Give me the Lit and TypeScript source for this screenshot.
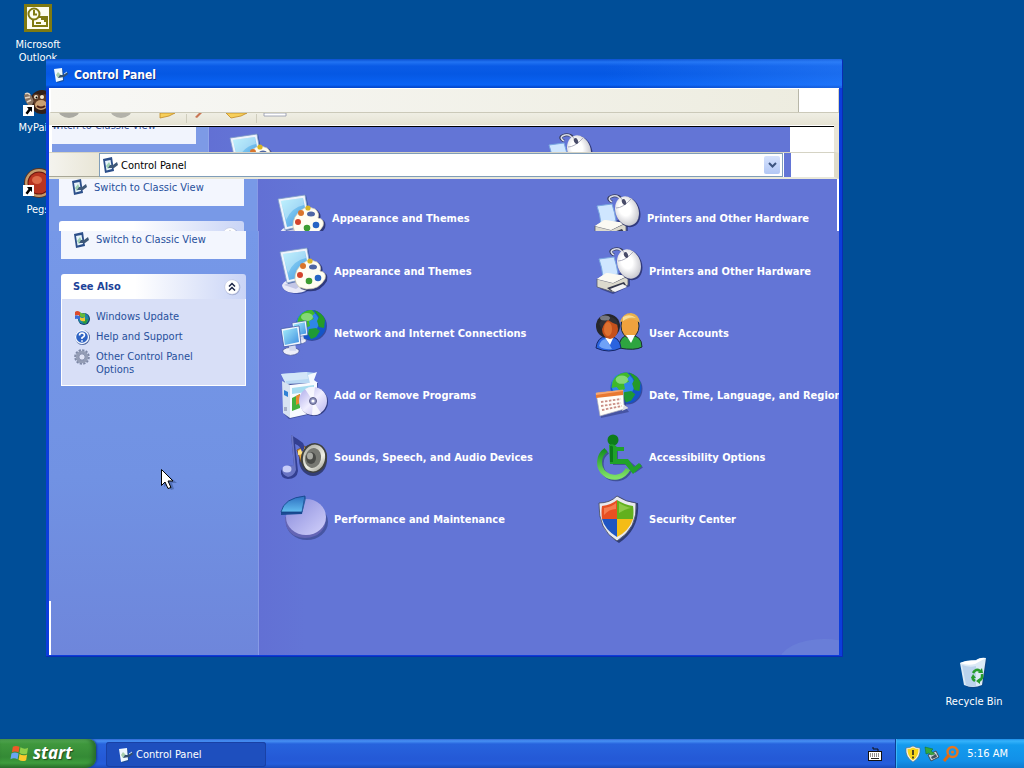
import { LitElement, html, css, svg } from "lit";
import { customElement, property } from "lit/decorators.js";

const globe = (cx: number, cy: number, r: number) => svg`
  <circle cx=${cx + 1} cy=${cy + 1} r=${r} fill="#1a2f78" opacity=".6"/>
  <g transform="translate(${cx} ${cy}) scale(${r / 15})">
    <circle r="15" fill="#1455c8"/>
    <circle cx="-3" cy="-3" r="11" fill="#2f86e8"/>
    <path d="M-13-6C-10-13-4-15 1-15L4-12 1-9 3-6-2-4-1 1-6 3-9-1-14 0Z" fill="#3fb92b"/>
    <path d="M3-15Q12-12 14-5L13 3 8 2 6-4 8-8Z" fill="#259a27"/>
    <path d="M-2 4L5 3 9 6 5 12 0 14-3 9Z" fill="#1f9a35"/>
    <ellipse cx="-4" cy="-8" rx="6" ry="4" fill="#d9ffd0" opacity=".45"/>
  </g>`;

const monitor = svg`
  <path d="M7 37Q16 31 31 37Q32 45 19 47Q3 46 3 40Z" fill="#26357f" opacity=".6"/>
  <path d="M2 38Q6 31 18 33Q31 34 30 39Q28 45 17 46Q3 46 2 38Z" fill="#e9e9f8"/>
  <path d="M4 38Q12 33 24 36L16 42Z" fill="#c3c6e6"/>
  <path d="M18 31L25 29 27 39 20 41Z" fill="#d4d6ef"/>
  <path d="M1 5L28 1 34 31 8 37Z" fill="#29448e" opacity=".7"/>
  <path d="M0 5L27 1 32 30 7 36Z" fill="#eef3fb" stroke="#7f9cc8" stroke-width=".8"/>
  <path d="M3 7L25 4 30 28 9 33Z" fill="url(#scr)"/>
  <path d="M3 7L25 4 26 11Q14 13 8 26Z" fill="#dff8ff" opacity=".45"/>`;

const printer = svg`
  <path d="M5 34L27 25 35 30V39L18 47 5 42Z" fill="#202a66" opacity=".6"/>
  <path d="M4 12L19 10Q22 19 23 27L8 30Q7 20 4 12Z" fill="#cfe6ff" stroke="#7aa8e0"/>
  <path d="M2 32L11 26 32 29 26 37 14 38Z" fill="#f6f5ec"/>
  <path d="M2 32L18 36 33 29V38L18 45 2 40Z" fill="#dcdacd" stroke="#55586c" stroke-width=".8"/>
  <path d="M2 32L12 26 32 29 18 36Z" fill="#fbfaf3"/>
  <path d="M12 41L29 35 31 38 16 44Z" fill="#34384c"/>
  <path d="M15 42L28 37 32 40 20 45Z" fill="#f4f4f4"/>
  <path d="M19 8Q12 4 20 2Q27 1 29 7" fill="none" stroke="#383e5d" stroke-width="3"/>
  <path d="M19 8Q13 4 20 2Q26 1 28 7" fill="none" stroke="#d8dbe8" stroke-width="1.5"/>
  <ellipse cx="35" cy="18" rx="12" ry="15.500" transform="rotate(-20 35 18)" fill="#242c66" opacity=".8"/>
  <ellipse cx="34" cy="17" rx="11.500" ry="15" transform="rotate(-20 34 17)" fill="url(#mouse)"/>
  <path d="M23 14Q30 14 38 5M28 4L32 10" fill="none" stroke="#9a9db0" stroke-width=".8"/>
  <ellipse cx="31" cy="8" rx="2" ry="3" transform="rotate(-24 31 8)" fill="#474b68"/>`;

const palette = svg`
  <path d="M21 42Q14 34 19 24Q28 10 39 16Q44 20 42 25Q49 26 47 34Q40 46 27 44Z" fill="#1c265f" opacity=".75"/>
  <path d="M19 40Q12 33 17 23Q26 9 37 15Q42 19 40 24Q47 25 45 32Q39 43 26 42Z" fill="#fffdf2" stroke="#cfc9ae" stroke-width=".7"/>
  <ellipse cx="33" cy="20" rx="4" ry="2.500" fill="#4e66a4"/>
  <circle cx="23" cy="19" r="3" fill="#d9752b"/>
  <circle cx="30" cy="14" r="2.600" fill="#d9b626"/>
  <circle cx="20" cy="28" r="3" fill="#d3442c"/>
  <circle cx="29" cy="34" r="3.300" fill="#3d9c31"/>
  <circle cx="38" cy="31" r="3.300" fill="#2765c4"/>`;

const smallMonitor = (x: number, y: number, s: number) => svg`
  <g transform="translate(${x} ${y}) scale(${s})">
    <path d="M2 26Q10 21 19 26Q20 31 10 32Q1 31 2 26Z" fill="#eceef9" stroke="#4b5799" stroke-width=".8"/>
    <path d="M8 20H15L16 27H9Z" fill="#d3d8ef"/>
    <path d="M0 4L19 1 21 20 3 23Z" fill="#f3f7fe" stroke="#3b57a4" stroke-width=".8"/>
    <path d="M2 6L17 3 19 18 4 21Z" fill="url(#scr)"/>
  </g>`;

const icons: Record<string, [number, unknown]> = {
  themes: [48, svg`${monitor}${palette}`],
  printers: [48, printer],
  network: [48, svg`${globe(31, 16, 15)}${smallMonitor(12, 11, 0.75)}${smallMonitor(1, 16, 0.95)}`],
  users: [48, svg`
    <g stroke="#1c2a35" stroke-width="1">
      <path d="M24 39Q24 27 34 26Q47 26 47 38Q40 42 24 39Z" fill="#2ea540"/>
      <ellipse cx="35" cy="17" rx="9" ry="12" fill="#f0a23e"/>
    </g>
    <path d="M25 13Q28 4 36 4Q44 5 45 14Q38 8 32 11Z" fill="#e8b04f"/>
    <path d="M28 8Q35 4 41 9Q34 7 28 12Z" fill="#f9dd96"/>
    <path d="M31 26L36 34 40 26Z" fill="#fff"/>
    <path d="M1 39Q2 28 12 27Q25 27 26 39Q14 45 1 39Z" fill="#2a63df" stroke="#142769"/>
    <path d="M4 37Q6 30 11 30L17 40Q9 41 4 37Z" fill="#6fa2f7"/>
    <path d="M9 27L15 36 19 27Z" fill="#fff"/>
    <ellipse cx="13" cy="17" rx="12" ry="12" fill="#26262b"/>
    <ellipse cx="15" cy="20" rx="8" ry="10" fill="#c4501c"/>
    <ellipse cx="13" cy="20" rx="4" ry="7" fill="#de7130"/>
    <path d="M4 15Q8 7 16 8Q23 10 23 16Q17 14 13 11Q9 14 7 20Z" fill="#303036"/>
    <ellipse cx="10" cy="9" rx="5" ry="2.500" fill="#8b8d95" opacity=".8"/>`],
  programs: [48, svg`
    <path d="M4 10L38 12 36 42 9 48 4 43Z" fill="#24306e" opacity=".55"/>
    <path d="M1 3L27 1 36 2 31 12 6 13Z" fill="#b8d8f4"/>
    <path d="M1 3L6 13V10L28 8 27 1Z" fill="#d3e6f8"/>
    <path d="M28 4L37 1 34 9 38 12 30 12Z" fill="#f4f9ff"/>
    <path d="M2 10L10 14V47L3 42Z" fill="#d8e3f2"/>
    <path d="M10 14L37 11V41L10 47Z" fill="#f8fbff"/>
    <path d="M12 17L34 14V20L12 23Z" fill="#a6dcf0"/>
    <path d="M12 27L20 23V37L12 40Z" fill="#44b13c"/>
    <path d="M16 25L20 23 20 32 16 34Z" fill="#e78b2e"/>
    <path d="M4 19L8 21V26L4 24Z" fill="#2f81d4"/>
    <path d="M4 36H7V40H4Z" fill="#a6afc5"/>
    <circle cx="34" cy="31" r="14" fill="#202a66" opacity=".75"/>
    <circle cx="33" cy="30" r="14" fill="url(#disc)"/>
    <path d="M33 30L25 18Q30 15 35 16ZM33 30L41 42Q37 45 32 44Z" fill="#fff" opacity=".8"/>
    <circle cx="33" cy="30" r="3.500" fill="#8f93c0" stroke="#5c5f87"/>
    <circle cx="33" cy="30" r="1.600" fill="#fff"/>`],
  sounds: [48, svg`
    <ellipse cx="33" cy="27" rx="14" ry="16" fill="#20264f" opacity=".7"/>
    <path d="M17 17L25 13 29 32 21 29Z" fill="#e9a53d" stroke="#6e4818" stroke-width=".7"/>
    <path d="M18 18L25 15 24 21 18 22Z" fill="#ffe287"/>
    <ellipse cx="34" cy="25" rx="13" ry="15" transform="rotate(14 34 25)" fill="#3f403d"/>
    <ellipse cx="34" cy="25" rx="11" ry="13.500" transform="rotate(14 34 25)" fill="url(#cone)"/>
    <ellipse cx="33" cy="25" rx="8" ry="10" transform="rotate(14 33 25)" fill="#777872"/>
    <ellipse cx="31" cy="25" rx="5" ry="6" fill="#484946"/>
    <ellipse cx="30" cy="23" rx="3" ry="3.500" fill="#a9aaa4"/>
    <path d="M11 2Q18 6 23 10Q26 15 22 19Q20 12 15 11L18 38Q17 46 8 46 0 45 1 38 3 32 14 33Z" fill="#333f91"/>
    <path d="M11 2L13 3 16 37Q14 43 8 44 2 42 2 37 5 32 14 33Z" fill="#6974c4"/>
    <ellipse cx="7" cy="36" rx="4.500" ry="3.500" fill="#c7cdf8"/>`],
  performance: [48, svg`
    <ellipse cx="27" cy="27" rx="21" ry="18" fill="#29356f" opacity=".5"/>
    <path d="M5 22Q5 42 25 43Q46 42 46 22Z" fill="#6465b5"/>
    <ellipse cx="26" cy="22" rx="20" ry="18" fill="url(#pie)"/>
    <path d="M1 17V20L22 19V16Z" fill="#194b93"/>
    <path d="M1 17Q4 3 25 1L22 17Z" fill="url(#slice)" stroke="#123f85" stroke-width=".8"/>
    <path d="M22 19V16L25 1 26 3Z" fill="#2a62a8"/>`],
  datetime: [48, svg`${globe(31, 17, 15.5)}
    <path d="M2 24L28 20 32 38 34 41 6 47Z" fill="#2a3470" opacity=".5"/>
    <path d="M1 22L28 19 29 34 33 37 5 45Z" fill="#fffefa" stroke="#a6a9b8" stroke-width=".7"/>
    <path d="M1 22L28 19V24L1 27Z" fill="#e87932"/>
    <path d="M1 22L28 19V20L1 24Z" fill="#f7a873"/>
    <path d="M6 31L26 28M6 35L26 32M7 39L27 35" stroke="#c98f86" stroke-width="1.800" stroke-dasharray="2.500 1.500"/>
    <path d="M29 34L33 37 27 40Z" fill="#dadce5"/>`],
  access: [48, svg`
    <g transform="translate(1.500 1.500)" fill="none" stroke="#1d2f5c" stroke-width="5" opacity=".5">
      <path d="M11 17A15 15 0 1 0 33 36M19 13V28H31L39 35 45 31"/></g>
    <circle cx="18" cy="7" r="5.500" fill="#0d7d1a"/>
    <path d="M11 17A15 15 0 1 0 33 36" fill="none" stroke="url(#wheel)" stroke-width="5"/>
    <path d="M14 12Q19 10 22 14V14H29V18H22V26H33L39 34 44 30 47 33 38 41 30 31H15Z" fill="#20a22a"/>
    <path d="M15 13Q17 12 18 14V29H15Z" fill="#0b7b1a"/>`],
  security: [48, svg`
    <path d="M24 2Q33 8 43 8Q45 34 24 48Q5 37 5 9Q16 9 24 2Z" fill="#1d2957" opacity=".75"/>
    <path d="M22 1Q31 7 41 8Q43 33 22 46Q3 35 4 8Q15 8 22 1Z" fill="#e8e9ef" stroke="#3c4359" stroke-width=".8"/>
    <path d="M22 5V24H7Q6 17 7 11Q16 10 22 5Z" fill="#e84f22"/>
    <path d="M22 5Q30 10 38 11Q39 17 38 24H22Z" fill="#62b01d"/>
    <path d="M7 24H22V42Q10 35 7 24Z" fill="#1f55c2"/>
    <path d="M22 24H38Q34 36 22 42Z" fill="#f4bc16"/>
    <path d="M9 13Q17 12 21 8V14Q14 14 9 20Z" fill="#ff9c70" opacity=".6"/>
    <path d="M24 8Q31 12 36 13Q30 14 24 18Z" fill="#b5e472" opacity=".5"/>`],
  panel: [16, svg`
    <path d="M1 2L10 0 12 14 3 16Z" fill="#2c4f8a"/>
    <path d="M3 4L8.500 3 10 12 4.500 13.500Z" fill="#e9f5fb"/>
    <path d="M4 9L7 5 9 9 6 12Z" fill="#9fd0b4"/>
    <path d="M6 11L8 8 11 8 15 5 16 8 12 11Z" fill="#3e5878"/>`],
  panelLight: [16, svg`
    <path d="M3 3L11 2 12 14 5 16Z" fill="#1e4b83" opacity=".7"/>
    <path d="M2 2L10 1 11 13 4 15Z" fill="#eff8fe"/>
    <path d="M4 8L6 5 9 8 6 11Z" fill="#a8cfae"/>
    <path d="M6 11L8 8 11 8 15 5 16 7 12 10Z" fill="#33506f"/>
    <path d="M12 7L15 5" stroke="#c8d9e8"/>`],
  update: [16, svg`
    <circle cx="10" cy="10" r="6" fill="#12406b"/><circle cx="9.500" cy="9.500" r="5.300" fill="#1c86a8"/>
    <path d="M8 11L14 10 12 15 9 14Z" fill="#2c9b3b"/>
    <path d="M1 3Q3 1 6 3L6 7Q3 5 1 7Z" fill="#dd4a2c"/><path d="M6 3Q9 6 11 4V8Q8 9 6 7Z" fill="#67b936"/>
    <path d="M1 7Q3 5 6 8V11Q3 9 1 10Z" fill="#3b6bd8"/><path d="M6 8Q8 10 11 8V12Q8 13 6 11Z" fill="#f0c632"/>`],
  help: [16, svg`
    <circle cx="8.500" cy="8.500" r="7.500" fill="#46619d"/><circle cx="8" cy="8" r="7.200" fill="#f2f6ff"/>
    <circle cx="8" cy="8" r="5.800" fill="#2e63c4"/>
    <path d="M5.500 6.500Q5.500 4 8 4T10.500 6.300Q10.500 7.600 8 8.700V10M8 11.200V12.700" fill="none" stroke="#fff" stroke-width="1.600"/>`],
  gear: [16, svg`
    <circle cx="8" cy="8" r="6.600" fill="none" stroke="#7d88a6" stroke-width="2.400" stroke-dasharray="2.200 1.250"/>
    <circle cx="8" cy="8" r="4.800" fill="none" stroke="#949db5" stroke-width="3"/>
    <circle cx="8" cy="8" r="3.200" fill="#dfe3f5" stroke="#6a7594" stroke-width=".8"/>`],
  outlook: [28, svg`
    <rect width="28" height="28" fill="#7f7a12"/><rect x="3" y="3" width="22" height="22" fill="#fdfdf0"/>
    <g fill="none" stroke="#7f7a12" stroke-width="2"><rect x="9" y="13" width="14" height="9" fill="#fdfdf0"/>
    <circle cx="10" cy="10" r="5.500" fill="#fdfdf0"/><path d="M10 6V10.500H13M17 15H21V18M12 19H17"/></g>`],
  monkey: [32, svg`
    <ellipse cx="20" cy="14" rx="12" ry="12" fill="#332018"/>
    <path d="M2 7Q5 3 9 7L12 13 9 19Q3 16 2 7Z" fill="#8a7462"/>
    <path d="M3 6Q6 4 8 7M3 10L8 9M5 14L9 12" stroke="#e3d5c4" stroke-width="1.500" fill="none"/>
    <path d="M11 7Q15 4 19 8Q23 4 25 8V20Q16 24 12 17Z" fill="#5d3b26"/>
    <circle cx="14" cy="9" r="2" fill="#f7ead2"/><circle cx="14.500" cy="9.500" r="1"/>
    <circle cx="20" cy="9" r="2" fill="#f7ead2"/>
    <ellipse cx="19" cy="17" rx="6" ry="5" fill="#c99f73"/>
    <path d="M15 18Q19 21 23 18" stroke="#4d2015" stroke-width="2" fill="none"/>`],
  gem: [32, svg`
    <circle cx="17" cy="15" r="15" fill="#593524"/><circle cx="17" cy="15" r="14" fill="#c49a6b"/>
    <circle cx="17" cy="15" r="11.500" fill="#6b1710"/><circle cx="17" cy="15" r="10.500" fill="#b83420"/>
    <ellipse cx="15" cy="12" rx="5" ry="4" fill="#dd6a48"/>`],
  shortcut: [11, svg`
    <rect width="11" height="11" fill="#fff"/><path d="M4 2H9V7L7.500 5.500 4.500 9.500 2.500 8 5.500 4Z" fill="#000"/>`],
  bin: [32, svg`
    <path d="M5 9L9 30Q17 33 25 28L29 3Z" fill="#1d3c70" opacity=".5"/>
    <path d="M2 6L6 28Q15 32 24 28L28 1Q20 1 18 3 8 3 2 6Z" fill="#dceaf6"/>
    <path d="M2 6Q10 9 17 7L28 1Q21 0 18 4Q9 3 2 6Z" fill="#fff"/>
    <path d="M4 8Q12 11 18 9V29Q12 31 8 28Z" fill="#bcd3ec"/>
    <g fill="none" stroke="#279c2e" stroke-width="2.600"><path d="M15 16Q18 11 22 14M24 17Q25 23 20 24M17 24Q14 22 15 20"/></g>
    <path d="M20 16L25 16 24 11ZM22 21L18 24 22 27ZM13 21L18 21 15 17Z" fill="#279c2e"/>`],
  flag: [20, svg`
    <path d="M3 3Q6 1 10 3L9 9Q5 7 2 9Z" fill="#ef5a28"/>
    <path d="M11 3.500Q15 6 19 4L18 10Q14 12 10 9.500Z" fill="#8fd04a"/>
    <path d="M1.500 10Q5 8 9 10L8 16Q4 14 .5 16Z" fill="#6aa5f2"/>
    <path d="M10 10.500Q14 13 18 11L17 17Q13 19 9 16.500Z" fill="#fcc92b"/>`],
  keyboard: [14, svg`
    <path d="M5 0V2H10V4" fill="none" stroke="#111"/><rect x=".5" y="4.500" width="13" height="9" fill="#fff" stroke="#111"/>
    <path d="M2 7H12M2 9H12" stroke="#222" stroke-dasharray="1 1"/><path d="M3 11.500H11" stroke="#222"/>`],
  alert: [16, svg`
    <path d="M8 0Q11 2 15 2Q16 11 8 16Q0 11 1 2Q5 2 8 0Z" fill="#f4f4ee" stroke="#5d6a77" stroke-width=".6"/>
    <path d="M8 1.500Q11 3 13.500 3Q14 10 8 14.500Q2 10 2.500 3Q5 3 8 1.500Z" fill="#f7d61b"/>
    <path d="M8 4V9M8 10.500V12.500" stroke="#222" stroke-width="1.600"/>`],
  eject: [16, svg`
    <path d="M4 9L12 5 15 11 7 15Z" fill="#cfd6dd" stroke="#3c4c58"/>
    <path d="M7 11L12 8 13 11 8 13Z" fill="#42505c"/><path d="M1 1L9 3 7 5 11 8 7 9 5 7 2 8Z" fill="#35a83d" stroke="#156e24" stroke-width=".5"/>`],
  lens: [16, svg`
    <circle cx="9.500" cy="6" r="5" fill="none" stroke="#e57620" stroke-width="2.400"/><circle cx="9.500" cy="6" r="1.600" fill="#e57620"/>
    <path d="M6 9L1 15" stroke="#e0690f" stroke-width="3"/>`],
  cursor: [20, svg`
    <path d="M3 3V18L7 15 10 21 13 20 11 14H16Z" fill="#26407a" opacity=".4"/>
    <path d="M.5.500V16.500L4 13 7 19.500 10 18.500 7 12H12Z" fill="#fff" stroke="#000"/>`],
  strip: [240, svg`
    <ellipse cx="20" cy="-4" rx="11" ry="9" fill="#aaa9a2"/><ellipse cx="72" cy="-4" rx="11" ry="9" fill="#b3b2aa"/>
    <path d="M111 0H126L120 3 111 5Z" fill="#f7cf5a" stroke="#c08a26" stroke-width=".8"/>
    <path d="M137.500 1V10M207.500 1V10" stroke="#cfcdbd"/>
    <path d="M146 4L150 0H153L148 5Z" fill="#c97655"/>
    <path d="M177 0H198L192 3 182 5Z" fill="#f7cf5a" stroke="#c08a26" stroke-width=".8"/>
    <path d="M215 0H237V3H215Z" fill="#fff" stroke="#8f94a8" stroke-width=".8"/>`],
  chevrons: [16, svg`
    <circle cx="8.500" cy="8.500" r="7.800" fill="#9da9cf"/><circle cx="8" cy="8" r="7.300" fill="#fff" stroke="#c2c9e2" stroke-width=".6"/>
    <path d="M5 7.500L8 4.500 11 7.500M5 11.500L8 8.500 11 11.500" fill="none" stroke="#1c2547" stroke-width="1.500"/>`],
};

const gradients = svg`<defs>
  <linearGradient id="scr" x2="1" y2="1"><stop offset="0" stop-color="#a4ecfb"/><stop offset="1" stop-color="#3f8fe0"/></linearGradient>
  <radialGradient id="mouse" cx=".45" cy=".4" r=".6"><stop offset=".4" stop-color="#fff"/><stop offset="1" stop-color="#c9c9cf"/></radialGradient>
  <linearGradient id="disc" x2="1" y2="1"><stop offset="0" stop-color="#a9a6e8"/><stop offset=".5" stop-color="#f0eeff"/><stop offset="1" stop-color="#b4b1ee"/></linearGradient>
  <linearGradient id="cone" x2="1" y2="1"><stop offset="0" stop-color="#a5a59c"/><stop offset=".6" stop-color="#f0f0e6"/><stop offset="1" stop-color="#8f8f86"/></linearGradient>
  <linearGradient id="pie" x2="1" y2="1"><stop offset="0" stop-color="#8789db"/><stop offset="1" stop-color="#d2d1fb"/></linearGradient>
  <linearGradient id="slice" x2="0" y2="1"><stop offset="0" stop-color="#2c6fc0"/><stop offset="1" stop-color="#63bdf0"/></linearGradient>
  <linearGradient id="wheel" x2="0" y2="1"><stop offset="0" stop-color="#169022"/><stop offset="1" stop-color="#7fe266"/></linearGradient>
</defs>`;

@customElement("xp-icon")
class XpIcon extends LitElement {
  @property() name = "panel";
  static styles = css`
    :host { display: block; flex: none; width: 16px; height: 16px; }
    svg { display: block; width: 100%; height: 100%; overflow: visible; }
  `;
  render() {
    const [size, art] = icons[this.name];
    return html`<svg viewBox="0 0 ${size} ${size}" preserveAspectRatio="xMinYMin meet" aria-hidden="true">${gradients}${art}</svg>`;
  }
}

const categories: [string, string][] = [
  ["themes", "Appearance and Themes"],
  ["printers", "Printers and Other Hardware"],
  ["network", "Network and Internet Connections"],
  ["users", "User Accounts"],
  ["programs", "Add or Remove Programs"],
  ["datetime", "Date, Time, Language, and Region"],
  ["sounds", "Sounds, Speech, and Audio Devices"],
  ["access", "Accessibility Options"],
  ["performance", "Performance and Maintenance"],
  ["security", "Security Center"],
];

@customElement("app-root")
class AppRoot extends LitElement {
  static styles = css`
    :host {
      display: flex; flex-direction: column; position: relative; height: 100vh; overflow: hidden;
      background: #004e98; color: #fff;
      font: 11px/13px "DejaVu Sans Condensed", "DejaVu Sans", sans-serif;
    }
    * { box-sizing: border-box; }
    button { font: inherit; color: inherit; border: 0; padding: 0; margin: 0; background: none; text-align: left; }
    a { color: inherit; text-decoration: none; }
    .desktop { flex: 1; position: relative; min-height: 0; }
    .shortcut {
      position: absolute; display: flex; flex-direction: column; align-items: center;
      width: 76px; gap: 6px; text-align: center;
    }
    .outlook { left: 0; top: 4px; }
    .pals { left: 0; top: 88px; gap: 1px; }
    .pegs { left: 0; top: 168px; gap: 3px; }
    .recycle { right: 12px; top: 657px; }
    .art { position: relative; }
    .art xp-icon { width: 32px; height: 32px; }
    .outlook xp-icon { width: 28px; height: 28px; }
    .art .arrow { position: absolute; left: 1px; bottom: 4px; width: 11px; height: 11px; }

    .window {
      position: absolute; left: 46px; right: 181px; top: 59px; bottom: 82px;
      display: flex; flex-direction: column;
      background: #0c3ddb; padding: 0 3px 1px 3px;
      border: solid #0a2cb4; border-width: 0 1px 1px 0;
      border-radius: 2px 2px 0 0; overflow: hidden;
    }
    .title {
      display: flex; align-items: center; gap: 6px; flex: none;
      height: 29px; margin: 0 -3px; padding: 2px 8px 0 6px;
      background: linear-gradient(90deg, transparent 70%, #3a8cff66), linear-gradient(#0a4fd0, #2173f3 3px, #0a5be6 7px, #0558e4 15px, #0a63f5 26px, #0349d0 28px);
      font-size: 12px; line-height: 16px; font-weight: 700;
    }
    .title h1 { margin: 0; font: inherit; text-shadow: 1px 1px #0c328f; }
    .menubar {
      display: flex; justify-content: flex-end; flex: none; height: 25px;
      border: solid #fff; border-width: 1px 0 0 2px; border-bottom: 1px solid #cbc9b9;
      background: linear-gradient(90deg, #f8f8f6, #edecdf);
    }
    .throbber { width: 41px; background: #fff; border-left: 1px solid #b8b7a8; border-right: 1px solid #d5d3c4; }
    .toolbar { flex: none; height: 12px; overflow: hidden; background: linear-gradient(#efeee4, #e6e3d3); }
    .toolbar xp-icon { width: 240px; height: 240px; }

    .torn {
      display: flex; flex: none; height: 28px; overflow: hidden; background: #fff;
      padding: 1px 0 0 3px; border-right: 5px solid #e9e5d6; border-bottom: 1px solid #d5d3c4;
    }
    .torn .view { flex: 1; border-top: 1px solid #000; min-width: 0; display: flex; }
    .torn .side { width: 157px; background: #7d9ae6; border-right: 1px solid #8fa5ea; }
    .torn .box { width: 144px; height: 17px; background: #f1f4fd; color: #33529f; overflow: hidden; }
    .torn .box div { margin: -8px 0 0 -6px; white-space: nowrap; }
    .torn .blank { flex: none; width: 44px; background: #fff; border-top: 1px solid #000; }

    .address { display: flex; flex: none; height: 26px; background: #fff; border-bottom: 2px solid #e9e8da; border-right: 5px solid #e0dcc8; }
    .address .label { width: 50px; background: linear-gradient(90deg, #f4f3ee, #e9e6d6); border-bottom: 1px solid #a8a797; }
    .field {
      flex: 1; display: flex; align-items: center; gap: 3px; min-width: 0; padding: 0 2px;
      border: 1px solid #7f9db9; color: #000;
    }
    .field input { flex: 1; min-width: 0; border: 0; padding: 0; font: inherit; outline: 0; background: none; }
    .drop {
      display: grid; place-items: center; width: 16px; height: 18px; border-radius: 2px;
      background: linear-gradient(#d6e2fd, #b2c7f5);
    }
    .drop svg { width: 9px; height: 6px; }
    .address .edge { width: 8px; background: #6375d6; border-left: 1px solid #fff; }
    .address .spare { width: 43px; }

    .pane { display: flex; position: relative; overflow: hidden; background: #6375d6; }
    .ghost { flex: none; height: 52px; border-right: 2px solid #fff; }
    .body { flex: 1; min-height: 0; }
    .sidebar {
      flex: none; width: 210px; padding: 0 12px; border-right: 1px solid #879ae6;
      background: linear-gradient(#7698e8, #7192e3 58%, #6e86db);
      color: #27509c;
    }
    .ghost .sidebar { width: 209px; padding: 0 13px 0 10px; background: #7899e7; }
    .switch { display: flex; align-items: center; gap: 7px; height: 28px; padding: 0 12px 11px; background: #f3f6fe; white-space: nowrap; }
    .ghost .switch { height: 27px; }
    .see { margin-top: 15px; }
    .see button {
      display: flex; align-items: center; justify-content: space-between; width: 100%; height: 25px;
      padding: 0 6px 0 12px; border-radius: 3px 3px 0 0; font-weight: 700; color: #1c4298;
      background: linear-gradient(90deg, #fff 40%, #c9d4f6);
    }
    .ghost .see button { height: 28px; }
    .see ul {
      display: flex; flex-direction: column; gap: 4px; list-style: none; margin: 0; padding: 10px 12px 9px;
      background: #d8dff7; border: 1px solid #fff; border-top: 0;
    }
    .see li a { display: flex; gap: 6px; align-items: flex-start; min-height: 16px; }
    .see li span { padding-top: 1px; max-width: 120px; }
    .grid {
      flex: 1; min-width: 0; display: grid; grid-template-columns: 315px 1fr; gap: 14px 0;
      align-content: start; padding: 16px 0 0 21px; overflow: hidden;
      background: linear-gradient(90deg, #6270d4, #6375d6 8%);
    }
    .ghost .grid { padding-top: 15px; padding-left: 20px; }
    .torn .grid { padding-top: 6px; }
    .cat { display: flex; align-items: center; gap: 6px; height: 48px; font-weight: 700; white-space: nowrap; }
    .cat xp-icon { width: 48px; height: 48px; }
    .mark { position: absolute; left: 0; bottom: 0; width: 2px; height: 54px; background: #fff; }
    .swoosh { position: absolute; right: -30px; bottom: -30px; width: 90px; height: 46px; border-radius: 50%; background: #738bdd; opacity: .4; }

    .taskbar {
      display: flex; flex: none; height: 29px;
      background: linear-gradient(#3168d5, #4791f4 2px, #2763dd 5px, #2459d6 20px, #245edc 25px, #1c4ab8);
    }
    .start {
      display: flex; align-items: center; gap: 4px; width: 96px; padding: 0 8px 1px 10px;
      border-radius: 0 8px 10px 0; color: #fff; text-shadow: 1px 1px 1px #20491e;
      font: italic 700 17px/20px "Noto Sans", sans-serif;
      background: linear-gradient(#5cb35c, #3f973d 5px, #348a35 18px, #3d9c3d 24px, #2b732c);
      box-shadow: inset -3px 0 4px #276b2c, 1px 0 2px #173d8c;
    }
    .start xp-icon { width: 19px; height: 19px; }
    .task {
      display: flex; align-items: center; gap: 3px; width: 160px; margin: 3px 0 1px 10px; padding: 0 11px;
      border-radius: 3px; background: #1e4fbe; box-shadow: inset 0 0 0 1px #1941a5;
    }
    .lang { display: flex; align-items: center; margin-left: auto; padding-right: 13px; }
    .lang xp-icon { width: 14px; height: 14px; }
    .tray {
      display: flex; align-items: center; gap: 3px; padding: 0 16px 0 9px; width: 129px;
      border-left: 1px solid #0a3f94; box-shadow: inset 1px 0 #3cb7f7;
      background: linear-gradient(#1d8ce8, #35b3fb 2px, #139bee 6px, #1290e8 22px, #0f7bd0);
    }
    .tray time { margin-left: auto; white-space: nowrap; }
    .cursor { position: absolute; left: 161px; top: 469px; width: 20px; height: 20px; }
  `;

  private cat([icon, label]: [string, string]) {
    return html`<a class="cat" href="#"><xp-icon name=${icon}></xp-icon><span>${label}</span></a>`;
  }

  private switchLink() {
    return html`<a class="switch" href="#"><xp-icon name="panel"></xp-icon><span>Switch to Classic View</span></a>`;
  }

  render() {
    const links = [["update", "Windows Update"], ["help", "Help and Support"], ["gear", "Other Control Panel Options"]];
    return html`
      <main class="desktop">
        <a class="shortcut outlook" href="#"><span class="art"><xp-icon name="outlook"></xp-icon></span><span>Microsoft<br>Outlook</span></a>
        <a class="shortcut pals" href="#"><span class="art"><xp-icon name="monkey"></xp-icon><xp-icon class="arrow" name="shortcut"></xp-icon></span><span>MyPaint</span></a>
        <a class="shortcut pegs" href="#"><span class="art"><xp-icon name="gem"></xp-icon><xp-icon class="arrow" name="shortcut"></xp-icon></span><span>Pegs</span></a>
        <a class="shortcut recycle" href="#"><span class="art"><xp-icon name="bin"></xp-icon></span><span>Recycle Bin</span></a>

        <section class="window">
          <header class="title"><xp-icon name="panelLight"></xp-icon><h1>Control Panel</h1></header>
          <div class="menubar"><div class="throbber"></div></div>
          <div class="toolbar"><xp-icon name="strip"></xp-icon></div>
          <div class="torn">
            <div class="view">
              <div class="side"><div class="box"><div>Switch to Classic View</div></div></div>
              <div class="grid">${categories.slice(0, 2).map((c) => this.cat(c))}</div>
            </div>
            <div class="blank"></div>
          </div>
          <div class="address">
            <div class="label"></div>
            <div class="field">
              <xp-icon name="panel"></xp-icon>
              <input aria-label="Address" value="Control Panel">
              <button class="drop" aria-label="Show addresses"><svg viewBox="0 0 9 6"><path d="M1 1L4.500 4.500 8 1" fill="none" stroke="#3d547f" stroke-width="2"/></svg></button>
            </div>
            <div class="edge"></div><div class="spare"></div>
          </div>
          <div class="pane ghost">
            <aside class="sidebar">${this.switchLink()}
              <div class="see"><button>See Also<xp-icon name="chevrons"></xp-icon></button></div>
            </aside>
            <div class="grid">${categories.slice(0, 2).map((c) => this.cat(c))}</div>
          </div>
          <div class="pane body">
            <aside class="sidebar">${this.switchLink()}
              <div class="see">
                <button>See Also<xp-icon name="chevrons"></xp-icon></button>
                <ul>${links.map(([i, t]) => html`<li><a href="#"><xp-icon name=${i}></xp-icon><span>${t}</span></a></li>`)}</ul>
              </div>
            </aside>
            <div class="grid">${categories.map((c) => this.cat(c))}</div>
            <div class="mark"></div><div class="swoosh"></div>
          </div>
        </section>
        <xp-icon class="cursor" name="cursor"></xp-icon>
      </main>
      <footer class="taskbar">
        <button class="start"><xp-icon name="flag"></xp-icon>start</button>
        <button class="task"><xp-icon name="panelLight"></xp-icon>Control Panel</button>
        <div class="lang"><xp-icon name="keyboard"></xp-icon></div>
        <div class="tray"><xp-icon name="alert"></xp-icon><xp-icon name="eject"></xp-icon><xp-icon name="lens"></xp-icon><time>5:16 AM</time></div>
      </footer>
    `;
  }
}
